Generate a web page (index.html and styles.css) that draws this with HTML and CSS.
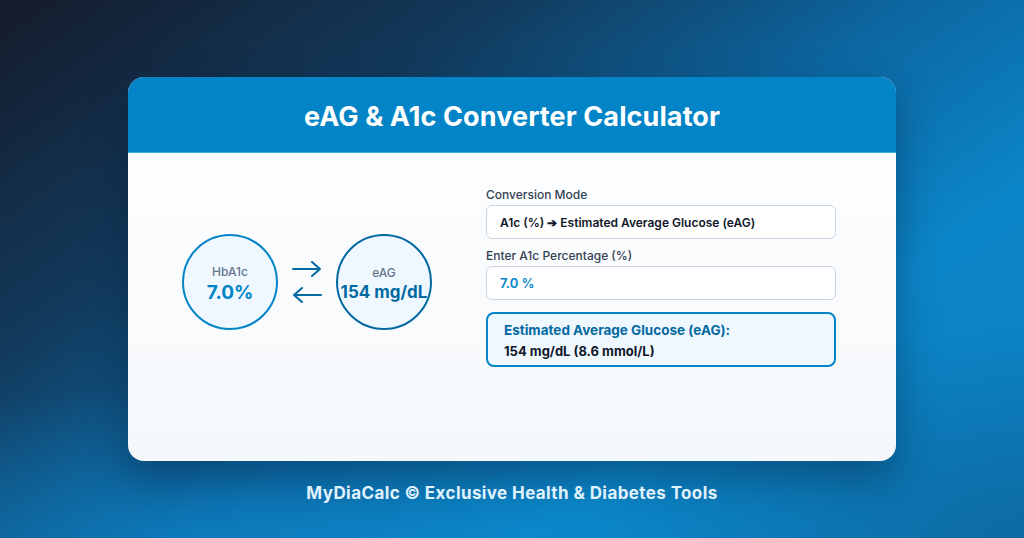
FILE: index.html
```html
<!DOCTYPE html>
<html>
<head>
<link rel="stylesheet" href="styles.css">
</head>
<body>
<div class="page">
  <div class="card">
    <div class="card-header">
      <h1>eAG &amp; A1c Converter Calculator</h1>
    </div>
    <div class="card-body">
      <div class="visual">
        <div class="circle circle-a1c">
          <span class="circle-label">HbA1c</span>
          <span class="circle-value">7.0%</span>
        </div>
        <div class="arrows">
          <svg width="30" height="16" viewBox="0 0 30 16">
            <path d="M1 8 H28 M20 1 L28 8 L20 15" fill="none" stroke="#0369a1" stroke-width="2" stroke-linecap="round" stroke-linejoin="round"/>
          </svg>
          <svg width="30" height="16" viewBox="0 0 30 16">
            <path d="M29 8 H2 M10 1 L2 8 L10 15" fill="none" stroke="#0369a1" stroke-width="2" stroke-linecap="round" stroke-linejoin="round"/>
          </svg>
        </div>
        <div class="circle circle-eag">
          <span class="circle-label">eAG</span>
          <span class="circle-value">154 mg/dL</span>
        </div>
      </div>
      <div class="form">
        <label class="field-label">Conversion Mode</label>
        <div class="field field-select">A1c (%) ➔ Estimated Average Glucose (eAG)</div>
        <label class="field-label">Enter A1c Percentage (%)</label>
        <div class="field field-input">7.0 %</div>
        <div class="result">
          <div class="result-title">Estimated Average Glucose (eAG):</div>
          <div class="result-value">154 mg/dL (8.6 mmol/L)</div>
        </div>
      </div>
    </div>
  </div>
  <div class="footer">MyDiaCalc © Exclusive Health &amp; Diabetes Tools</div>
</div>
</body>
</html>
```

FILE: styles.css
```css
* {
  box-sizing: border-box;
}

body {
  margin: 0;
  font-family: Inter, "Noto Sans", sans-serif;
}

.page {
  width: 1024px;
  height: 538px;
  overflow: hidden;
  display: flex;
  flex-direction: column;
  align-items: center;
  padding-top: 77px;
  background:
    radial-gradient(ellipse 700px 260px at 20% 105%, rgba(14, 140, 210, 0.55), rgba(14, 140, 210, 0) 70%),
    radial-gradient(ellipse 600px 300px at 100% 100%, rgba(12, 80, 130, 0.45), rgba(12, 80, 130, 0) 70%),
    linear-gradient(145deg, #151b2b 0%, #123a5c 28%, #0c68a3 52%, #0b86c8 72%, #0d7fbe 100%);
}

.card {
  width: 768px;
  height: 384px;
  border-radius: 16px;
  overflow: hidden;
  background: linear-gradient(180deg, #ffffff 0%, #f5f8fb 100%);
  box-shadow: 0 18px 40px rgba(5, 25, 50, 0.4);
}

.card-header {
  height: 76px;
  padding-top: 4px;
  background: #0284c7;
  border-bottom: 1px solid #3aa6de;
  display: flex;
  align-items: center;
  justify-content: center;
}

.card-header h1 {
  margin: 0;
  color: #fff;
  font-size: 27px;
  font-weight: 700;
  letter-spacing: 0.1px;
}

.card-body {
  display: grid;
  grid-template-columns: 1fr 350px;
  gap: 40px;
  padding: 34px 60px 0 40px;
}

.visual {
  display: flex;
  align-items: center;
  justify-content: center;
  padding-top: 10px;
}

.circle {
  width: 96px;
  height: 96px;
  border-radius: 50%;
  background: #f0f8ff;
  border: 2.5px solid #0284c7;
  display: flex;
  flex-direction: column;
  align-items: center;
  justify-content: center;
  white-space: nowrap;
  padding-top: 3px;
}

.circle-eag {
  border-color: #0369a1;
}

.circle-label {
  font-size: 12px;
  color: #64748b;
  font-weight: 500;
}

.circle-value {
  font-size: 19px;
  font-weight: 700;
  color: #0284c7;
  margin-top: 2px;
}

.circle-eag .circle-value {
  color: #0369a1;
  font-size: 17px;
}

.arrows {
  display: flex;
  flex-direction: column;
  gap: 10px;
  margin: 0 14px;
}

.arrows svg {
  display: block;
}

.form {
  display: flex;
  flex-direction: column;
}

.field-label {
  font-size: 12px;
  line-height: 15px;
  font-weight: 500;
  color: #334155;
  margin-bottom: 3px;
}

.field {
  height: 34px;
  border: 1.5px solid #cbd5e1;
  border-radius: 6px;
  background: #fff;
  display: flex;
  align-items: center;
  padding: 0 13px;
  margin-bottom: 9px;
  font-size: 12px;
  font-weight: 600;
}

.field-select {
  color: #0f172a;
}

.field-input {
  color: #0284c7;
  font-size: 13px;
}

.result {
  margin-top: 3px;
  height: 55px;
  border: 2px solid #0284c7;
  border-radius: 8px;
  background: #f0f8ff;
  padding: 7px 16px 0;
}

.result-title {
  font-size: 13.5px;
  line-height: 18px;
  font-weight: 700;
  color: #0369a1;
}

.result-value {
  font-size: 13px;
  line-height: 18px;
  font-weight: 700;
  color: #0f172a;
  margin-top: 3px;
}

.footer {
  margin-top: 22px;
  color: #e0f2fe;
  font-size: 17px;
  font-weight: 700;
  letter-spacing: 0.4px;
}
```
